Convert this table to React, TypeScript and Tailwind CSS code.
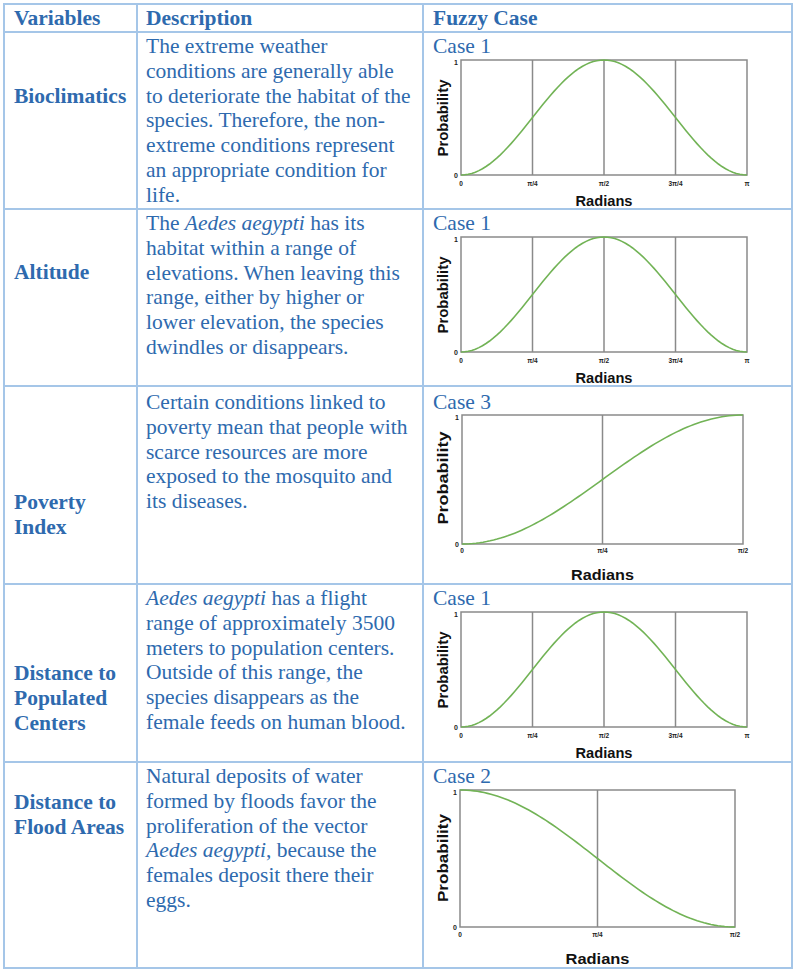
import React from 'react';

type Chart = {
  x0: number;
  x1: number;
  y0: number;
  y1: number;
  ticks: string[];
  fn: (t: number) => number;
  tickY: number;
  radY: number;
  radLen: number;
  probY: number;
  probLen: number;
};

const bell: Chart = {
  x0: 28,
  x1: 314,
  y0: 1,
  y1: 116,
  ticks: ['0', 'π/4', 'π/2', '3π/4', 'π'],
  fn: (t) => Math.sin(Math.PI * t) ** 2,
  tickY: 124,
  radY: 141,
  radLen: 57,
  probY: 59,
  probLen: 77,
};

const rising: Chart = {
  x0: 29,
  x1: 310,
  y0: 0,
  y1: 129,
  ticks: ['0', 'π/4', 'π/2'],
  fn: (t) => Math.sin((Math.PI * t) / 2) ** 2,
  tickY: 135,
  radY: 159,
  radLen: 63,
  probY: 63,
  probLen: 93,
};

const falling: Chart = {
  x0: 27,
  x1: 302,
  y0: 1,
  y1: 138,
  ticks: ['0', 'π/4', 'π/2'],
  fn: (t) => Math.cos((Math.PI * t) / 2) ** 2,
  tickY: 145,
  radY: 169,
  radLen: 64,
  probY: 69,
  probLen: 88,
};

function FuzzyChart({ c }: { c: Chart }) {
  const w = c.x1 - c.x0;
  const h = c.y1 - c.y0;
  const pts: string[] = [];
  for (let i = 0; i <= 80; i++) {
    const t = i / 80;
    pts.push(`${(c.x0 + t * w).toFixed(2)},${(c.y1 - c.fn(t) * h).toFixed(2)}`);
  }
  const n = c.ticks.length - 1;

  return (
    <svg width={350} height={c.radY + 10} className="block overflow-visible">
      <rect x={c.x0} y={c.y0} width={w} height={h} fill="#fff" stroke="#8a8a8a" strokeWidth={1.5} />
      {c.ticks.slice(1, -1).map((_, i) => {
        const x = c.x0 + ((i + 1) / n) * w;
        return <line key={i} x1={x} x2={x} y1={c.y0} y2={c.y1} stroke="#8a8a8a" strokeWidth={1.5} />;
      })}
      <polyline points={pts.join(' ')} fill="none" stroke="#72b356" strokeWidth={1.6} />
      <g fontFamily="Liberation Sans, Arial, sans-serif" fontWeight="bold" fill="#222">
        <text x={c.x0 - 5} y={c.y0 + 2} fontSize={7} textAnchor="middle" dominantBaseline="central">1</text>
        <text x={c.x0 - 5} y={c.y1} fontSize={7} textAnchor="middle" dominantBaseline="central">0</text>
        {c.ticks.map((label, i) => (
          <text
            key={label}
            x={c.x0 + (i / n) * w}
            y={c.tickY}
            fontSize={6.5}
            textAnchor="middle"
            dominantBaseline="central"
          >
            {label}
          </text>
        ))}
        <text
          x={c.x0 + w / 2}
          y={c.radY}
          fontSize={15}
          textAnchor="middle"
          dominantBaseline="central"
          textLength={c.radLen}
          lengthAdjust="spacingAndGlyphs"
          fill="#111"
        >
          Radians
        </text>
        <text
          transform={`translate(9 ${c.probY}) rotate(-90)`}
          fontSize={15}
          textAnchor="middle"
          dominantBaseline="central"
          textLength={c.probLen}
          lengthAdjust="spacingAndGlyphs"
          fill="#111"
        >
          Probability
        </text>
      </g>
    </svg>
  );
}

const rows = [
  {
    name: ['Bioclimatics'],
    namePad: 'pt-[51px]',
    descPad: 'pt-[1px]',
    desc: [
      'The extreme weather',
      'conditions are generally able',
      'to deteriorate the habitat of the',
      'species. Therefore, the non-',
      'extreme conditions represent',
      'an appropriate condition for',
      'life.',
    ],
    caseLabel: 'Case 1',
    chart: bell,
    h: 'h-[177px]',
  },
  {
    name: ['Altitude'],
    namePad: 'pt-[50px]',
    descPad: 'pt-[1px]',
    desc: [
      <>The <i>Aedes aegypti</i> has its</>,
      'habitat within a range of',
      'elevations. When leaving this',
      'range, either by higher or',
      'lower elevation, the species',
      'dwindles or disappears.',
    ],
    caseLabel: 'Case 1',
    chart: bell,
    h: 'h-[177px]',
  },
  {
    name: ['Poverty', 'Index'],
    namePad: 'pt-[103px]',
    descPad: 'pt-[3px]',
    desc: [
      'Certain conditions linked to',
      'poverty mean that people with',
      'scarce resources are more',
      'exposed to the mosquito and',
      'its diseases.',
    ],
    caseLabel: 'Case 3',
    chart: rising,
    h: 'h-[198px]',
  },
  {
    name: ['Distance to', 'Populated', 'Centers'],
    namePad: 'pt-[76px]',
    descPad: 'pt-[1px]',
    desc: [
      <><i>Aedes aegypti</i> has a flight</>,
      'range of approximately 3500',
      'meters to population centers.',
      'Outside of this range, the',
      'species disappears as the',
      'female feeds on human blood.',
    ],
    caseLabel: 'Case 1',
    chart: bell,
    h: 'h-[178px]',
  },
  {
    name: ['Distance to', 'Flood Areas'],
    namePad: 'pt-[27px]',
    descPad: 'pt-[1px]',
    desc: [
      'Natural deposits of water',
      'formed by floods favor the',
      'proliferation of the vector',
      <><i>Aedes aegypti</i>, because the</>,
      'females deposit there their',
      'eggs.',
    ],
    caseLabel: 'Case 2',
    chart: falling,
    h: 'h-[206px]',
  },
];

export default function App() {
  return (
    <div className="min-h-[977px] w-[799px] bg-white pl-[3px] pt-[3px]">
      <div className="grid w-[790px] grid-cols-[133px_286px_369px] border-l-2 border-t-2 border-[#a5c6e8] font-['Liberation_Serif','Times_New_Roman',serif] text-[21.5px] leading-[24.8px] text-[#2e6aae]">
        {/* header */}
        <div className="flex h-[28px] items-center border-b-2 border-r-2 border-[#a5c6e8] pl-[9px] font-bold">Variables</div>
        <div className="flex h-[28px] items-center border-b-2 border-r-2 border-[#a5c6e8] pl-[8px] font-bold">Description</div>
        <div className="flex h-[28px] items-center border-b-2 border-r-2 border-[#a5c6e8] pl-[9px] font-bold">Fuzzy Case</div>

        {rows.map((r, i) => (
          <React.Fragment key={i}>
            <div className={`${r.h} ${r.namePad} border-b-2 border-r-2 border-[#a5c6e8] pl-[9px] font-bold`}>
              {r.name.map((l) => (
                <div key={l} className="whitespace-nowrap">{l}</div>
              ))}
            </div>
            <div className={`${r.h} ${r.descPad} border-b-2 border-r-2 border-[#a5c6e8] pl-[8px]`}>
              {r.desc.map((l, j) => (
                <div key={j} className="whitespace-nowrap">{l}</div>
              ))}
            </div>
            <div className={`${r.h} ${r.descPad} border-b-2 border-r-2 border-[#a5c6e8] pl-[9px]`}>
              <div>{r.caseLabel}</div>
              <FuzzyChart c={r.chart} />
            </div>
          </React.Fragment>
        ))}
      </div>
    </div>
  );
}
